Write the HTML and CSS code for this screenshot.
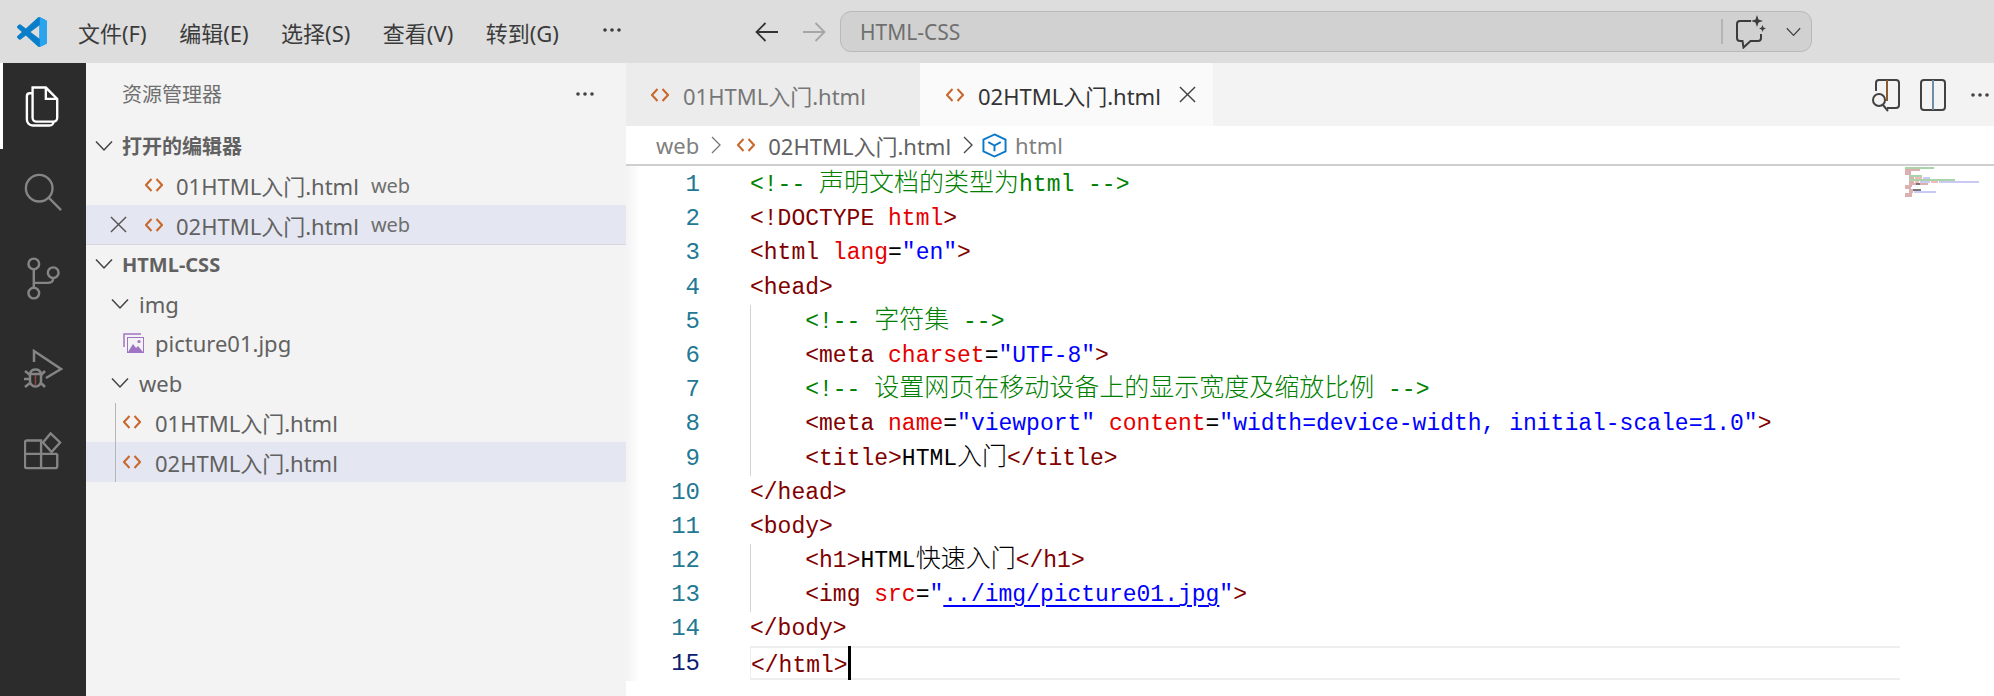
FILE: index.html
```html
<!DOCTYPE html>
<html lang="zh">
<head>
<meta charset="UTF-8">
<title>02HTML入门.html - HTML-CSS</title>
<link rel="stylesheet" href="styles.css">
</head>
<body>

<svg class="defs" width="0" height="0">
	<symbol id="code" viewBox="0 0 18 16">
		<path d="M6.500 2 1 8l5.500 6M11.500 2 17 8l-5.500 6" fill="none" stroke="#c8682c" stroke-width="2"/>
	</symbol>
	<symbol id="down" viewBox="0 0 18 12">
		<path d="M1 1.500 9 10l8-8.500" fill="none" stroke="#424242" stroke-width="1.500"/>
	</symbol>
	<symbol id="close" viewBox="0 0 18 18">
		<path d="M1 1l16 16M17 1 1 17" fill="none" stroke="currentColor" stroke-width="1.500"/>
	</symbol>
	<symbol id="dots" viewBox="0 0 20 4">
		<circle cx="3" cy="2" r="1.800"/><circle cx="10" cy="2" r="1.800"/><circle cx="17" cy="2" r="1.800"/>
	</symbol>
</svg>

<!-- title bar -->
<div class="titlebar">
	<svg class="logo" viewBox="0 0 100 100">
		<path d="M96.500 10.800 75.900.9a6.200 6.200 0 0 0-7.100 1.200L29.400 38 12.200 25a4.200 4.200 0 0 0-5.300.2L1.400 30.300a4.200 4.200 0 0 0 0 6.200L16.300 50 1.400 63.500a4.200 4.200 0 0 0 0 6.200l5.500 5a4.200 4.200 0 0 0 5.300.2l17.200-13 39.400 35.900a6.200 6.200 0 0 0 7.100 1.200l20.600-9.900a6.200 6.200 0 0 0 3.500-5.600V16.400a6.200 6.200 0 0 0-3.500-5.600ZM75 72.700 45.100 50 75 27.300Z" fill="#0a7ec9"/>
		<path d="M75.900 99.100a6.200 6.200 0 0 0 3.700-.5l16.900-8.100a6.200 6.200 0 0 0 3.500-5.600V16.400a6.200 6.200 0 0 0-3.500-5.600L79.600 1.400a6.200 6.200 0 0 0-3.700-.5V27L75 27.300V72.700l.9.300Z" fill="#2aa4ef"/>
	</svg>
	<div class="menu">
		<span>文件(F)</span>
		<span>编辑(E)</span>
		<span>选择(S)</span>
		<span>查看(V)</span>
		<span>转到(G)</span>
	</div>
	<svg class="menu-more"><use href="#dots"/></svg>
	<svg class="nav-arrow" viewBox="0 0 24 20"><path d="M23 10H2M10.500 1 1.500 10l9 9" fill="none" stroke="#333" stroke-width="1.800"/></svg>
	<svg class="nav-arrow off" viewBox="0 0 24 20"><path d="M1 10h21M13.500 1l9 9-9 9" fill="none" stroke="#a6a6a6" stroke-width="1.800"/></svg>
	<div class="command">
		<span class="command-text">HTML-CSS</span>
		<i class="command-sep"></i>
		<svg class="copilot" viewBox="0 0 30 34">
			<path d="M15 6H4a3 3 0 0 0-3 3v14a3 3 0 0 0 3 3h2.500l1 6.500 7-6.500H22a3 3 0 0 0 3-3v-4" fill="none" stroke="#3b3b3b" stroke-width="2"/>
			<path d="M21 0l1.500 4.500L27 6l-4.500 1.500L21 12l-1.500-4.500L15 6l4.500-1.500ZM26.500 10l1 2.500 2.500 1-2.500 1-1 2.500-1-2.500-2.500-1 2.500-1Z" fill="#3b3b3b"/>
		</svg>
		<svg class="command-down" viewBox="0 0 18 12"><use href="#down"/></svg>
	</div>
</div>

<div class="workbench">

	<!-- activity bar -->
	<div class="activity">
		<div class="act act-on">
			<svg width="36" height="43" viewBox="0 0 38 44" fill="none" stroke="#fff" stroke-width="2.500">
				<path d="M8 2h14l12 12v20a4 4 0 0 1-4 4H12a4 4 0 0 1-4-4ZM22 2v12h12"/>
				<path d="M8 8H5a3 3 0 0 0-3 3v25a6 6 0 0 0 6 6h18a4 4 0 0 0 4-4"/>
			</svg>
		</div>
		<div class="act">
			<svg width="38" height="38" viewBox="0 0 40 40" fill="none" stroke="#858585" stroke-width="2.500">
				<circle cx="16" cy="16" r="14"/><path d="M26 26l13 13"/>
			</svg>
		</div>
		<div class="act">
			<svg width="33" height="43" viewBox="0 0 34 44" fill="none" stroke="#858585" stroke-width="2.500">
				<circle cx="7" cy="7" r="5.500"/><circle cx="7" cy="37" r="5.500"/><circle cx="27" cy="16" r="5.500"/>
				<path d="M7 12.500v19M27 21.500c0 4-2 5-6 5H7"/>
			</svg>
		</div>
		<div class="act">
			<svg width="40" height="39" viewBox="0 0 40 39" fill="none" stroke="#858585" stroke-width="2.500">
				<path d="M11 13V2l27 18-15 9"/>
				<path d="M2 22l5 4M1 30h6M2 38l5-4M22 38l-4-4M22 22l-4 4"/>
				<path d="M7 25c1-6 10-6 11 0ZM7 25h11v7a5.500 5.500 0 0 1-11 0Z"/>
				<path d="M12.500 26v11" stroke="#8a4a44" stroke-width="1.500"/>
			</svg>
		</div>
		<div class="act">
			<svg width="38" height="38" viewBox="0 0 40 40" fill="none" stroke="#858585" stroke-width="2.500">
				<path d="M1 11a2 2 0 0 1 2-2h15v29H3a2 2 0 0 1-2-2ZM1 23h34M18 38h15a2 2 0 0 0 2-2V23"/>
				<path d="M28 1.500 38 11l-9 10-9-10Z"/>
			</svg>
		</div>
	</div>

	<!-- side bar -->
	<div class="sidebar">
		<div class="side-head">
			<span>资源管理器</span>
			<svg class="side-more"><use href="#dots"/></svg>
		</div>

		<div class="row section">
			<svg class="chev"><use href="#down"/></svg>
			<span>打开的编辑器</span>
		</div>
		<div class="row open">
			<svg class="file-icon"><use href="#code"/></svg>
			<span class="name">01HTML入门.html</span>
			<span class="dir">web</span>
		</div>
		<div class="row open sel sel-line">
			<svg class="row-x"><use href="#close"/></svg>
			<svg class="file-icon"><use href="#code"/></svg>
			<span class="name">02HTML入门.html</span>
			<span class="dir">web</span>
		</div>

		<div class="row section">
			<svg class="chev"><use href="#down"/></svg>
			<span>HTML-CSS</span>
		</div>
		<div class="row folder">
			<svg class="chev"><use href="#down"/></svg>
			<span class="name">img</span>
		</div>
		<div class="row file">
			<svg class="pic-icon" viewBox="0 0 21 20">
				<path d="M1 14V1h17" fill="none" stroke="#a074c4" stroke-width="1.500"/>
				<rect x="4.500" y="4.500" width="16" height="15" fill="#f3f3f3" stroke="#a074c4"/>
				<path d="M5 19l5-8 3 4 2-2 5 6Z" fill="#a074c4"/>
				<circle cx="16" cy="8.500" r="1.600" fill="#a074c4"/>
			</svg>
			<span class="name">picture01.jpg</span>
		</div>
		<div class="row folder">
			<svg class="chev"><use href="#down"/></svg>
			<span class="name">web</span>
		</div>
		<div class="guided">
			<div class="row file">
				<svg class="file-icon"><use href="#code"/></svg>
				<span class="name">01HTML入门.html</span>
			</div>
			<div class="row file sel">
				<svg class="file-icon"><use href="#code"/></svg>
				<span class="name">02HTML入门.html</span>
			</div>
		</div>
	</div>

	<!-- editor -->
	<div class="editor">
		<div class="tabs">
			<div class="tab">
				<svg class="file-icon"><use href="#code"/></svg>
				<span>01HTML入门.html</span>
			</div>
			<div class="tab tab-on">
				<svg class="file-icon"><use href="#code"/></svg>
				<span>02HTML入门.html</span>
				<svg class="tab-x"><use href="#close"/></svg>
			</div>
			<div class="tab-actions">
				<svg width="28" height="34" viewBox="0 0 28 34" fill="none" stroke="#424242" stroke-width="2">
					<path d="M4 13V5a3 3 0 0 1 3-3h17a3 3 0 0 1 3 3v22a3 3 0 0 1-3 3H15"/>
					<path d="M15 2v21" stroke="#8a5a33"/>
					<circle cx="7" cy="22" r="6"/><path d="M11 27l5 6"/>
				</svg>
				<svg width="26" height="34" viewBox="0 0 26 34" fill="none" stroke="#424242" stroke-width="2">
					<rect x="1" y="2" width="24" height="30" rx="3"/>
					<path d="M13 2v30" stroke="#6d8da3"/>
				</svg>
				<svg class="tab-more"><use href="#dots"/></svg>
			</div>
		</div>

		<div class="crumbs">
			<span>web</span>
			<svg class="crumb-sep" viewBox="0 0 10 18"><path d="M1 1l8 8-8 8" fill="none" stroke="#777" stroke-width="1.300"/></svg>
			<svg class="file-icon"><use href="#code"/></svg>
			<span class="crumb-file">02HTML入门.html</span>
			<svg class="crumb-sep" viewBox="0 0 10 18"><path d="M1 1l8 8-8 8" fill="none" stroke="#444" stroke-width="1.300"/></svg>
			<svg class="crumb-box" viewBox="0 0 26 26" fill="none" stroke="#0a78c8" stroke-width="2">
				<path d="M13 1.500 24.500 7v12L13 24.500 1.500 19V7Z"/>
				<path d="M6.500 9.500 13 13l6.500-3.500M13 13v6"/>
			</svg>
			<span class="crumb-end">html</span>
		</div>

		<div class="code">
			<div class="line"><b>1</b><code class="c">&lt;!-- <i>声明文档的类型为</i>html --&gt;</code></div>
			<div class="line"><b>2</b><code><span class="t">&lt;!DOCTYPE</span> <span class="a">html</span><span class="t">&gt;</span></code></div>
			<div class="line"><b>3</b><code><span class="t">&lt;html</span> <span class="a">lang</span>=<span class="s">"en"</span><span class="t">&gt;</span></code></div>
			<div class="line"><b>4</b><code><span class="t">&lt;head&gt;</span></code></div>
			<div class="line in"><b>5</b><code class="c">    &lt;!-- <i>字符集</i> --&gt;</code></div>
			<div class="line in"><b>6</b><code>    <span class="t">&lt;meta</span> <span class="a">charset</span>=<span class="s">"UTF-8"</span><span class="t">&gt;</span></code></div>
			<div class="line in"><b>7</b><code class="c">    &lt;!-- <i>设置网页在移动设备上的显示宽度及缩放比例</i> --&gt;</code></div>
			<div class="line in"><b>8</b><code>    <span class="t">&lt;meta</span> <span class="a">name</span>=<span class="s">"viewport"</span> <span class="a">content</span>=<span class="s">"width=device-width, initial-scale=1.0"</span><span class="t">&gt;</span></code></div>
			<div class="line in"><b>9</b><code>    <span class="t">&lt;title&gt;</span>HTML<i>入门</i><span class="t">&lt;/title&gt;</span></code></div>
			<div class="line"><b>10</b><code><span class="t">&lt;/head&gt;</span></code></div>
			<div class="line"><b>11</b><code><span class="t">&lt;body&gt;</span></code></div>
			<div class="line in"><b>12</b><code>    <span class="t">&lt;h1&gt;</span>HTML<i>快速入门</i><span class="t">&lt;/h1&gt;</span></code></div>
			<div class="line in"><b>13</b><code>    <span class="t">&lt;img</span> <span class="a">src</span>=<span class="s">"<u>../img/picture01.jpg</u>"</span><span class="t">&gt;</span></code></div>
			<div class="line"><b>14</b><code><span class="t">&lt;/body&gt;</span></code></div>
			<div class="line cur"><b>15</b><code><span class="t">&lt;/html&gt;</span><em class="caret"></em></code></div>

			<!-- minimap -->
			<svg class="minimap" width="76" height="30" viewBox="0 0 76 30">
				<g fill="#a9d3a9"><rect x="0" y="0" width="29" height="2"/><rect x="4" y="8" width="13" height="2"/><rect x="4" y="12" width="46" height="2"/></g>
				<g fill="#dcb0b0"><rect x="0" y="2" width="15" height="2"/><rect x="0" y="4" width="6" height="2"/><rect x="0" y="6" width="6" height="2"/><rect x="4" y="10" width="5" height="2"/><rect x="4" y="14" width="5" height="2"/><rect x="4" y="16" width="7" height="2"/><rect x="15" y="16" width="8" height="2"/><rect x="0" y="18" width="7" height="2"/><rect x="0" y="20" width="6" height="2"/><rect x="4" y="22" width="4" height="2"/><rect x="4" y="24" width="4" height="2"/><rect x="0" y="26" width="7" height="2"/><rect x="0" y="28" width="7" height="2"/></g>
				<g fill="#f4b8b8"><rect x="10" y="10" width="7" height="2"/><rect x="10" y="14" width="4" height="2"/><rect x="26" y="14" width="7" height="2"/></g>
				<g fill="#c9c9f4"><rect x="18" y="10" width="7" height="2"/><rect x="15" y="14" width="10" height="2"/><rect x="34" y="14" width="40" height="2"/><rect x="9" y="24" width="22" height="2"/></g>
				<g fill="#777"><rect x="11" y="16" width="4" height="2"/><rect x="8" y="22" width="8" height="2"/></g>
			</svg>
		</div>
	</div>
</div>

</body>
</html>
```

FILE: styles.css
```css
body { margin: 0; height: 696px; overflow: hidden; background: #fff; font-family: "Noto Sans", "Noto Sans CJK SC", sans-serif; font-size: 22px; color: #616161; }
svg { display: block; flex: none; }
.defs { position: absolute; }

/* title bar */
.titlebar { display: flex; align-items: center; height: 63px; background: #dddddd; color: #3b3b3b; }
.logo { width: 30px; height: 30px; margin-left: 17px; }
.menu { display: flex; gap: 32.5px; margin-left: 31px; }
.menu-more { width: 20px; height: 4px; margin: 0 0 4px 43px; fill: #3b3b3b; }
.nav-arrow { width: 24px; height: 20px; margin-left: 133px; }
.nav-arrow.off { margin-left: 23px; }
.command { display: flex; align-items: center; width: 951px; height: 39px; margin-left: 14px; padding-left: 19px; background: #d1d1d1; border: 1px solid #b9b9b9; border-radius: 11px; }
.command-text { width: 861px; color: #6f6f6f; font-size: 21px; }
.command-sep { width: 2px; height: 25px; background: #b4b4b4; }
.copilot { width: 30px; height: 34px; margin-left: 13px; }
.command-down { width: 15px; height: 10px; margin-left: 20px; }

.workbench { display: flex; height: 633px; }

/* activity bar */
.activity { width: 86px; flex: none; background: #2c2c2c; }
.act { display: flex; justify-content: center; align-items: center; height: 86px; }
.act-on { box-sizing: border-box; border-left: 3px solid #fff; }
.act-on svg { margin-left: -3px; }
.act:nth-child(4) { height: 94px; }
.act:nth-child(5) { height: 72px; }

/* side bar */
.sidebar { width: 540px; flex: none; background: #f3f3f3; }
.side-head { display: flex; justify-content: space-between; align-items: center; height: 63px; padding: 0 31px 2px 36px; box-sizing: border-box; font-size: 20px; color: #6f6f6f; }
.side-more { width: 20px; height: 4px; fill: #424242; }
.row { display: flex; align-items: center; height: 39.5px; box-sizing: border-box; white-space: nowrap; }
.section { padding-left: 9px; font-weight: 700; font-size: 20px; color: #616161; }
.section .chev { margin-right: 9px; }
.chev { width: 18px; height: 12px; }
.sel { background: #e4e6f1; }
.sel-line { box-shadow: inset 0 -1px 0 #d6d6dc; }
.file-icon { width: 18px; height: 16px; }
.open { padding-left: 59px; }
.open .file-icon { margin-right: 13px; }
.open.sel { padding-left: 24px; }
.row-x { width: 17px; height: 17px; margin-right: 18px; color: #555; }
.dir { margin-left: 12px; font-size: 20px; color: #6f6f6f; }
.folder { padding-left: 25px; }
.folder .chev { margin-right: 10px; }
.file { padding-left: 37px; }
.file .file-icon { margin-right: 14px; }
.pic-icon { width: 21px; height: 20px; margin-right: 11px; }
.guided { background: linear-gradient(#b5b5b5, #b5b5b5) 29px 0 / 1px 100% no-repeat; }
.guided .sel { background: linear-gradient(#b5b5b5, #b5b5b5) 29px 0 / 1px 100% no-repeat, #e4e6f1; }

/* editor */
.editor { flex: 1; min-width: 0; }
.tabs { display: flex; height: 63px; background: #f3f3f3; }
.tab { display: flex; align-items: center; width: 294px; padding-left: 25px; box-sizing: border-box; background: #ececec; color: #777; }
.tab .file-icon { margin-right: 14px; }
.tab-on { width: 293px; padding-left: 26px; background: #fafafa; color: #333; }
.tab-x { width: 17px; height: 17px; margin-left: 18px; color: #424242; }
.tab-actions { display: flex; align-items: center; gap: 20px; margin-left: auto; padding-right: 4px; }
.tab-more { width: 20px; height: 4px; fill: #424242; margin-left: 4px; }
.crumbs { display: flex; align-items: center; height: 40px; padding-left: 30px; box-sizing: border-box; border-bottom: 2px solid #cfcfcf; color: #808080; }
.crumb-sep { width: 10px; height: 18px; margin: 0 16px 0 12px; }
.crumb-sep + .file-icon { margin-right: 13px; }
.crumb-file { color: #616161; }
.crumb-box { width: 25px; height: 25px; margin-left: -7px; margin-right: 8px; }
.crumb-end { color: #808080; }

/* code */
.code { position: relative; padding-top: 2px; font-family: "Liberation Mono", "Noto Sans CJK SC", monospace; font-size: 23px; background: linear-gradient(90deg, #f3f3f3, #fff) 0 0 / 14px 100% no-repeat; }
.line { display: flex; height: 34.2px; line-height: 34.2px; }
.line b { width: 74px; text-align: right; font-weight: 400; font-size: 24px; color: #237893; }
.line code { margin-left: 50px; flex: 1; font-family: inherit; white-space: pre; color: #000; }
.line i { font-style: normal; font-family: "Noto Sans CJK SC", sans-serif; font-size: 25px; font-weight: 300; line-height: 1; }
.line.in code { background: linear-gradient(#d3d3d3, #d3d3d3) 0 0 / 1px 100% no-repeat; }
.c { color: #008000 !important; }
.t { color: #800000; }
.a { color: #e50000; }
.s { color: #0000ff; }
.s u { text-decoration-thickness: 2px; text-underline-offset: 4px; }
.cur b { color: #0b216f; }
.cur code { margin-right: 94px; height: 34px; margin-top: -1px; line-height: 32px; box-sizing: border-box; border: 2px solid #eeeeee; border-left-width: 1px; border-right: 0; }
.caret { display: inline-block; width: 3px; height: 34px; margin: -2px 0 -8px; background: #000; }
.minimap { position: absolute; right: 13px; top: 1px; }
```
